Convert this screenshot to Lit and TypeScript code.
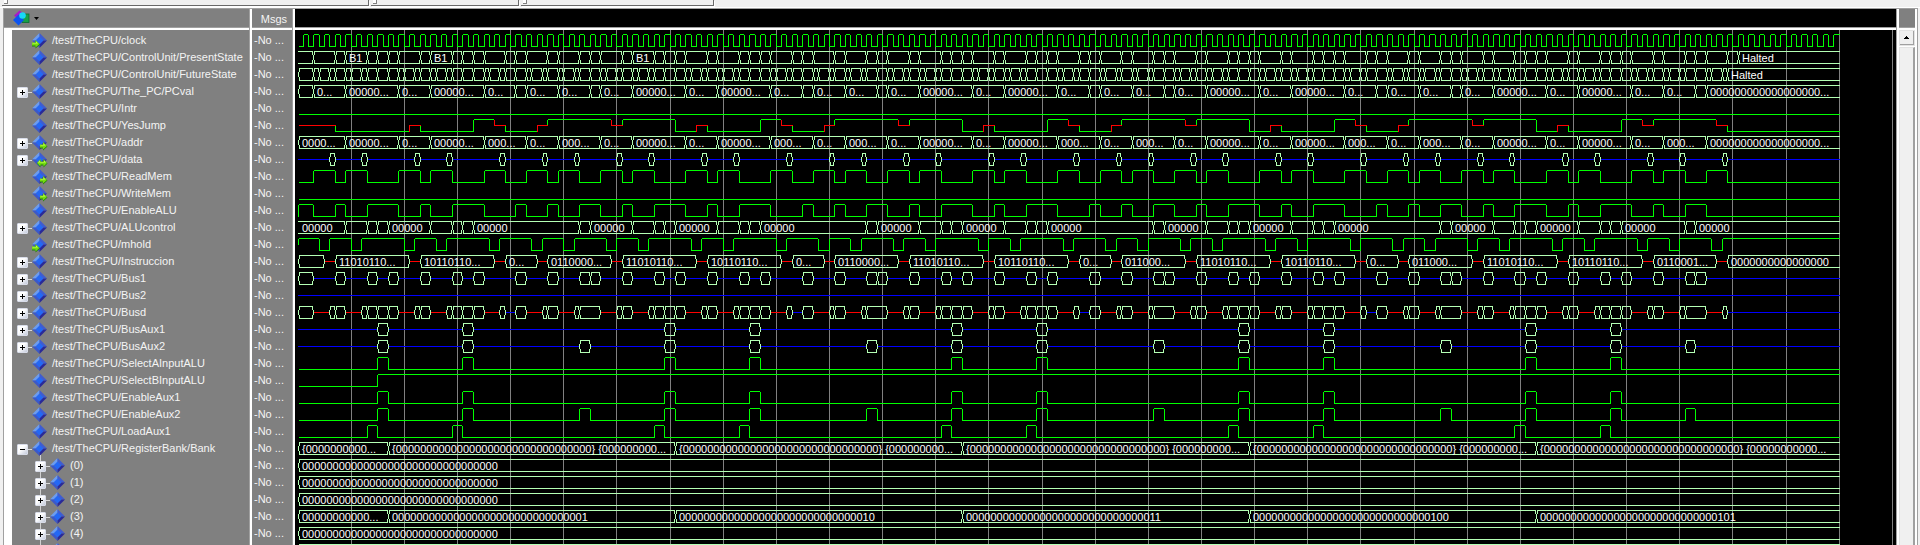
import { LitElement, html, svg, css, nothing } from "lit";
import { customElement, property } from "lit/decorators.js";

type Level = "hi" | "lo" | "mid";
type Step = [start: number, level: Level];
type Cell = { from: number; to: number; kind: "bus" | "z" | "x"; label?: string; open?: boolean };
type Port = "in" | "out" | "inout";

interface Signal {
  name: string;
  value?: string;
  port?: Port;
  tree?: "+" | "-";
  child?: boolean;
  logic?: Step[];
  bus?: Cell[];
}

/* Times are counted in half clock periods. */
const END = 290;
const LOOP = 54;
const STARTS = [3, 57, 111, 165, 219];
const ROW = 17;
const ORIGIN = 3;
const HALF = 1488 / 280;
const X = (t: number) => ORIGIN + Math.floor(t * HALF);

/* Relative times of one program loop; the last pass ends with the halt sequence. */
const unroll = (rel: number[], tail: number[], cut = 36): number[] => [
  ...STARTS.slice(0, -1).flatMap((s) => rel.map((r) => s + r)),
  ...rel.filter((r) => r < cut).map((r) => STARTS[4] + r),
  ...tail,
];

const fetches = unroll([0, 6, 16, 22, 32, 40, 46], [257, 265]);

const cells = (marks: number[], label: (from: number, i: number) => string | undefined, openStart = false): Cell[] => {
  const all = [0, ...marks.filter((m) => m > 0), END];
  return all.slice(0, -1).map((from, i) => ({
    from,
    to: all[i + 1],
    kind: "bus" as const,
    label: label(from, i),
    open: openStart && i === 0,
  }));
};

/* Boxes on an otherwise idle line. */
const sparse = (boxes: [number, number][], idle: "z" | "x"): Cell[] => {
  const out: Cell[] = [];
  let at = 0;
  for (const [from, to] of boxes) {
    if (from > at) out.push({ from: at, to: from, kind: idle });
    out.push({ from, to, kind: "bus" });
    at = to;
  }
  if (at < END) out.push({ from: at, to: END, kind: idle });
  return out;
};

const pulses = (ranges: [number, number][], on: Level = "hi", off: Level = "lo"): Step[] => {
  const steps: Step[] = [];
  if (!ranges.length || ranges[0][0] > 0) steps.push([0, off]);
  for (const [a, b] of ranges) {
    steps.push([a, on]);
    if (b < END) steps.push([b, off]);
  }
  return steps;
};

const clock: Step[] = Array.from({ length: END }, (_, t): Step => [t, t % 2 ? "hi" : "lo"]);

const states = unroll(
  [0, 4, 6, 10, 12, 14, 16, 20, 22, 26, 28, 30, 32, 36, 38, 40, 44, 46, 50, 52],
  [255, 257, 261, 263, 265, 269, 271],
);
const nextStates = [
  ...states.filter((t) => t < 271),
  ...fetches.flatMap((t) => [t + 1, t + 3]),
].sort((a, b) => a - b);

const pcMarks = unroll([0, 6, 16, 22, 32, 38, 40, 46, 52], [257, 263, 265]);
const addrMarks = unroll([6, 16, 22, 32, 40, 46, 54], [257, 265]);
const aluMarks = unroll([6, 10, 12, 14, 22, 26, 28, 30, 50, 52], [261, 263]);
const LONG = "0".repeat(18) + "...";
const ZERO = "0".repeat(32);

const widthLabel = (marks: number[]) => (from: number) => {
  const to = [...marks, END].find((m) => m > from) ?? END;
  const w = to - from;
  if (w > 20) return LONG;
  return w >= 10 ? "00000..." : w === 9 ? "0000..." : w === 8 ? "000..." : w === 6 ? "0..." : from === 0 ? undefined : undefined;
};

const aluLabel = (from: number) =>
  from === 0 || from === 263 || [14, 30, 52].includes((from - 3) % LOOP) ? "00000" : undefined;

const jump: Step[] = [[0, "mid"], [7, "lo"], [21, "mid"], [23, "lo"]];
STARTS.forEach((s, i) => {
  if (i) jump.push([s + 4, "hi"], [s + 14, "lo"], [s + 18, "mid"], [s + 20, "lo"]);
  jump.push([s + 30, "hi"], [s + 34, "mid"]);
  /* The mid level that closes a pass runs two units into the next one. */
  if (i < 4) jump.push([s + 36, "lo"], [s + 42, "mid"], [s + 44, "hi"], [s + 56, "mid"]);
  else jump.push([255, "hi"], [267, "mid"], [269, "lo"]);
});

const instruction: Cell[] = [{ from: 0, to: 5, kind: "bus" }];
STARTS.forEach((s, i) => {
  const words: [number, number, string][] = [
    [s + 4, s + 18, "11010110..."],
    [s + 20, s + 34, "10110110..."],
  ];
  if (i < 4) words.push([s + 36, s + 42, "0..."], [s + 44, s + 56, i < 2 ? "0110000..." : "011000..."]);
  else words.push([255, 267, "0110001..."], [269, END, "0".repeat(16)]);
  for (const [from, to, label] of words) {
    instruction.push({ from: from - 2, to: from, kind: "x" }, { from, to, kind: "bus", label });
  }
});

const span = (rel: [number, number][], tail: [number, number][]): [number, number][] => [
  ...STARTS.slice(0, -1).flatMap((s) => rel.map(([a, b]): [number, number] => [s + a, s + b])),
  ...rel.filter(([a]) => a < 36).map(([a, b]): [number, number] => [STARTS[4] + a, STARTS[4] + b]),
  ...tail,
];

const bus1 = span(
  [[4, 6], [10, 12], [14, 16], [20, 22], [26, 28], [30, 32], [38, 40], [44, 46], [50, 52], [52, 54]],
  [[255, 257], [261, 263], [263, 265]],
);
const aux1 = span([[12, 14], [28, 30]], []);
const aux2 = span([[12, 14], [28, 30], [50, 52]], [[261, 263]]);
const load = span([[10, 12], [26, 28]], []);
const busd = span(
  [[3, 4], [4, 6], [9, 10], [10, 12], [12, 14], [14, 16], [19, 20], [20, 22], [25, 26], [26, 28], [28, 30],
   [30, 32], [35, 36], [38, 40], [43, 44], [44, 46], [49, 50], [50, 54]],
  [[255, 257], [260, 261], [261, 265], [268, 269]],
);
const busdCells = sparse([[0, 3], ...busd], "x").map((c): Cell =>
  c.kind === "x" && (c.to - c.from === 2 || c.from === 269) ? { ...c, kind: "z" } : c,
);

const waits = fetches.map((t): [number, number] => [t, t + 4]);
/* The ALU rests during every wait; the jump wait lasts one state longer. */
const aluOff = waits.map(([a, b]): [number, number] =>
  a === 265 ? [a, END] : STARTS.slice(0, -1).includes(a - 32) ? [a, b + 2] : [a, b],
);

const regMarks = [17, 71, 125, 179, 233];
const bankLabel = (_: number, i: number) =>
  i === 0 ? "{0000000000..." : `{${ZERO}} {${"0".repeat(i === 5 ? 11 : 9)}...`;
const reg3Label = (_: number, i: number) => (i === 0 ? "00000000000..." : i.toString(2).padStart(32, "0"));

const zeroReg = (name: string): Signal => ({ name, tree: "+", child: true, bus: cells([], () => ZERO) });

const P = "/test/TheCPU/";
const SIGNALS: Signal[] = [
  { name: P + "clock", port: "in", logic: clock },
  { name: P + "ControlUnit/PresentState", bus: cells(states, (t) => ([9, 25, 63].includes(t) ? "B1" : t === 271 ? "Halted" : undefined), true) },
  { name: P + "ControlUnit/FutureState", bus: cells(nextStates, (t) => (t === 269 ? "Halted" : undefined)) },
  { name: P + "The_PC/PCval", tree: "+", bus: cells(pcMarks, widthLabel(pcMarks)) },
  { name: P + "Intr", logic: [[0, "lo"]] },
  { name: P + "YesJump", logic: jump },
  { name: P + "addr", port: "out", tree: "+", bus: cells(addrMarks, widthLabel(addrMarks)) },
  { name: P + "data", port: "inout", tree: "+", bus: sparse(fetches.map((t) => [t + 3, t + 4]), "z") },
  { name: P + "ReadMem", port: "out", logic: pulses(waits) },
  { name: P + "WriteMem", port: "out", logic: [[0, "lo"]] },
  { name: P + "EnableALU", logic: pulses(aluOff, "lo", "hi") },
  { name: P + "ALUcontrol", tree: "+", bus: cells(aluMarks, aluLabel, true) },
  { name: P + "mhold", port: "in", logic: pulses(fetches.map((t) => [t + 1, t + 3]), "lo", "hi") },
  { name: P + "Instruccion", tree: "+", bus: instruction },
  { name: P + "Bus1", tree: "+", bus: sparse([[0, 3], ...bus1], "z") },
  { name: P + "Bus2", tree: "+", bus: sparse([], "z") },
  { name: P + "Busd", tree: "+", bus: busdCells },
  { name: P + "BusAux1", tree: "+", bus: sparse(aux1, "z") },
  { name: P + "BusAux2", tree: "+", bus: sparse(aux2, "z") },
  { name: P + "SelectAInputALU", logic: pulses(aux1) },
  { name: P + "SelectBInputALU", logic: [[0, "lo"], [15, "hi"]] },
  { name: P + "EnableAux1", logic: pulses(aux1) },
  { name: P + "EnableAux2", logic: pulses(aux2) },
  { name: P + "LoadAux1", logic: pulses(load) },
  { name: P + "RegisterBank/Bank", tree: "-", bus: cells(regMarks, bankLabel) },
  zeroReg("(0)"),
  zeroReg("(1)"),
  zeroReg("(2)"),
  { name: "(3)", tree: "+", child: true, bus: cells(regMarks, reg3Label) },
  zeroReg("(4)"),
  { name: "", value: "", tree: "+", child: true, bus: cells([], () => undefined) },
];

const Y: Record<Level, number> = { hi: 4, mid: 10, lo: 16 };

@customElement("signal-icon")
export class SignalIcon extends LitElement {
  @property() port?: Port;

  static styles = css`
    :host { display: block; width: 15px; height: 15px; }
    svg { display: block; overflow: visible; }
    .arrow { fill: #74dc10; }
    .shine { fill: #c8ff50; }
    .shade { fill: #1f7a0c; }
  `;

  render() {
    const right = svg`<path class="shade" d="M8 10h3V7.500l4.500 4-4.500 4V13.500H8z"/><path class="arrow" d="M8 9.500h3V7l4 4-4 3.500V12.500H8z"/><path class="shine" d="M8.500 10h3V8.500l2 2h-5z"/>`;
    const left = svg`<path class="shade" d="M0 10h3.500V7.500l4.500 4-4.500 4V13.500H0z"/><path class="arrow" d="M0 9.500h3.500V7l4 4-4 3.500V12.500H0z"/><path class="shine" d="M.5 10h3.500V8.500l2 2H.5z"/>`;
    const both = svg`<path class="shade" d="M5 11.500l3.500-4v2.500h3V7.500l4 4-4 4v-2h-3v2z"/><path class="arrow" d="M5 11l3.500-4v2.500h3V7l3.500 4-3.500 3.500v-2h-3v2z"/><path class="shine" d="M6 10.500l2-2V10h4V8.500l2 2z"/>`;
    return html`<svg width="15" height="15" viewBox="0 0 15 15" aria-hidden="true">
      <path d="M7.500 0L0 7.500h7.500z" fill="#6c9cf0" />
      <path d="M7.500 0L15 7.500H7.500z" fill="#3f5cd0" />
      <path d="M0 7.500L7.500 15V7.500z" fill="#3c58c8" />
      <path d="M15 7.500L7.500 15V7.500z" fill="#2a2a98" />
      <path d="M7.500 3.500l4 4-4 4-4-4z" fill="#2468f4" />
      ${this.port === "out" ? right : this.port === "in" ? left : this.port === "inout" ? both : nothing}
    </svg>`;
  }
}

@customElement("wave-canvas")
export class WaveCanvas extends LitElement {
  static styles = css`
    :host { display: block; background: #000; overflow: hidden; }
    svg { display: block; width: 100%; }
    path { fill: none; stroke-width: 1; shape-rendering: crispEdges; }
    .grid { stroke: #808080; }
    .hi, .lo { stroke: #00ff00; }
    .mid, .x { stroke: #ff0000; }
    .z { stroke: #0000ff; }
    .bus { stroke: #b4ffb4; }
    text { fill: #fff; font: 11px "Liberation Sans", Arial, sans-serif; white-space: pre; }
  `;

  private logic(steps: Step[]) {
    const path: Record<Level, string> = { hi: "", lo: "", mid: "" };
    steps.forEach(([t, level], i) => {
      const a = X(t);
      const last = i === steps.length - 1;
      const b = X(last ? END : steps[i + 1][0]);
      const from = i === 0 || level === "hi" ? a + 1 : a;
      path[level] += `M${from} ${Y[level] + 0.5}H${level === "hi" && !last ? b : b + 1}`;
      if (i === 0 && level === "hi") path.hi += `M${a + 0.5} 5V${steps[1][0] === 3 ? 17 : 11}`;
      if (i > 0) {
        const ys = [Y[steps[i - 1][1]], Y[level]];
        path[level] += `M${a + 0.5} ${Math.min(...ys) + 1}V${Math.max(...ys) + 1}`;
      }
    });
    return (["lo", "hi", "mid"] as Level[]).map((l) => (path[l] ? svg`<path class=${l} d=${path[l]} />` : nothing));
  }

  private bus(list: Cell[]) {
    const path = { bus: "", x: "", z: "" };
    for (const c of list) {
      const a = X(c.from);
      const b = X(c.to);
      if (c.kind !== "bus") {
        path[c.kind] += `M${c.from ? a + 1 : a} 10.5H${c.to === END ? b + 1 : b}`;
        continue;
      }
      const l = c.open ? a : a + 1;
      const r = c.to === END ? b + 1 : b;
      path.bus += `M${l} 4.5H${r}M${l} 16.5H${r}`;
      if (!c.open) path.bus += `M${a + 1.5} 5V8M${a + 0.5} 8V13M${a + 1.5} 13V16`;
      if (c.to !== END) path.bus += `M${b - 0.5} 5V8M${b + 0.5} 8V13M${b - 0.5} 13V16`;
    }
    return [
      ...(["z", "x", "bus"] as const).map((k) => (path[k] ? svg`<path class=${k} d=${path[k]} />` : nothing)),
      ...list.filter((c) => c.label).map((c) => svg`<text x=${X(c.from) + 4} y="15">${c.label}</text>`),
    ];
  }

  render() {
    const height = SIGNALS.length * ROW;
    const grid = Array.from({ length: 80 }, (_, k) => `M${X((k + 1) * 10) + 0.5} 0V${height}`).join("");
    return html`<svg height=${height} role="img" aria-label="Signal waveforms">
      <path class="grid" d=${grid} />
      ${SIGNALS.map((s, i) => svg`<g transform="translate(0 ${i * ROW})">${s.logic ? this.logic(s.logic) : this.bus(s.bus ?? [])}</g>`)}
    </svg>`;
  }
}

@customElement("app-root")
export class AppRoot extends LitElement {
  static styles = css`
    :host {
      display: flex;
      flex-direction: column;
      height: 100vh;
      overflow: hidden;
      background: #f0f0f0;
      color: #f4f4f4;
      font: 11px/17px "Liberation Sans", Arial, sans-serif;
    }
    * { box-sizing: border-box; }
    button { font: inherit; padding: 0; border: 0; }
    .bars { display: flex; gap: 2px; height: 8px; padding: 0 0 0 2px; border-bottom: 1px solid #fff; flex: none; }
    .bar { height: 6px; border-right: 1px solid #696969; border-bottom: 1px solid #696969; box-shadow: 1px 1px #fff; padding-left: 2px; }
    .bar:nth-child(1) { width: 367px; }
    .bar:nth-child(2) { width: 148px; }
    .bar:nth-child(3) { width: 193px; }
    .grip { width: 4px; height: 4px; border: solid #808080; border-width: 0 1px 1px 0; background: #fff; }
    .window {
      flex: 1;
      min-height: 0;
      display: grid;
      grid-template-columns: 246px 43px minmax(0, 1fr) 20px;
      margin: 0 2px 0 3px;
      border: solid #a0a0a0;
      border-width: 1px 1px 0 1px;
      background: #fff;
    }
    .pane { display: flex; flex-direction: column; min-height: 0; overflow: hidden; }
    .names, .values, .waves { border-right: 1px solid #a0a0a0; }
    .values, .waves, .side { padding-left: 2px; }
    .head { flex: none; height: 19px; margin-bottom: 2px; background: #808080; border-bottom: 1px solid #a0a0a0; }
    .waves .head { background: #000; }
    .tools { display: flex; align-items: center; gap: 4px; width: 30px; height: 18px; margin-left: 9px; background: none; }
    .list { flex: 1; background: #808080; margin: 0; padding: 0; list-style: none; white-space: nowrap; }
    .names .list { margin-left: 8px; }
    .row { position: relative; display: flex; height: 17px; padding-left: 5px; line-height: 20px; }
    .child { padding-left: 23px; }
    .child::before { content: ""; position: absolute; left: 28px; top: 0; height: 17px; border-left: 1px solid #d0d0d0; }
    .slot { flex: none; width: 15px; height: 17px; padding-top: 6px; }
    .joint { display: flex; align-items: center; }
    .joint::after { content: ""; flex: 1; height: 1px; background: #d8d8d8; }
    .toggle {
      position: relative;
      width: 11px;
      height: 11px;
      border: 1px solid #d8dce8;
      border-radius: 1px;
      background: linear-gradient(135deg, #fff 40%, #c4cbdc);
      display: block;
    }
    .toggle svg { display: block; }
    signal-icon { flex: none; margin: 3px 5px 0 0; }
    .value { height: 17px; line-height: 20px; padding-left: 2px; }
    .title { text-align: right; padding-right: 5px; line-height: 20px; }
    wave-canvas { flex: none; }
    .side .head { margin-right: 2px; }
    .scroll { display: flex; flex-direction: column; gap: 1px; flex: 1; width: 16px; }
    .up { height: 16px; background: #f0f0f0; border: solid; border-width: 1px 2px 2px 1px; border-color: #fff #a0a0a0 #a0a0a0 #fff; display: grid; place-items: center; outline: 1px solid #e3e3e3; outline-offset: -1px; }
    .thumb { flex: 1; background: #f0f0f0; border: solid; border-width: 1px 2px 0 1px; border-color: #e3e3e3 #a0a0a0 #fff #e3e3e3; }
  `;

  private row(s: Signal) {
    return html`<li class="row ${s.child ? "child" : ""}">
      <span class="slot">
        ${s.tree
          ? html`<span class="joint"><button class="toggle" aria-label="${s.tree === "+" ? "Expand" : "Collapse"} ${s.name}">
              <svg width="9" height="9" aria-hidden="true" shape-rendering="crispEdges"><path d=${s.tree === "+" ? "M2 4.5H7M4.500 2V7" : "M2 4.5H7"} stroke="#000" /></svg>
            </button></span>`
          : nothing}
      </span>
      <signal-icon .port=${s.port}></signal-icon>
      <span>${s.name}</span>
    </li>`;
  }

  render() {
    return html`
      <div class="bars">
        <div class="bar"><div class="grip"></div></div>
        <div class="bar"><div class="grip"></div></div>
        <div class="bar"><div class="grip"></div></div>
      </div>
      <main class="window">
        <section class="pane names">
          <div class="head">
            <button class="tools" aria-label="Object filter">
              <svg width="17" height="16" viewBox="0 0 17 16" aria-hidden="true">
                <path d="M6.500.5l5 4-7 4-3.500-3z" fill="#a818c8" />
                <rect x="9" y="4" width="7" height="8.500" fill="#18a048" stroke="#0c6c30" stroke-width=".8" />
                <path d="M5.500 4.500l5.500 5.500-5.500 5.500L0 10z" fill="#0c54f0" />
                <circle cx="9.500" cy="5.500" r="3.300" fill="#18d8f8" />
              </svg>
              <svg width="5" height="3" viewBox="0 0 5 3" aria-hidden="true"><path d="M0 0h5L2.500 3z" fill="#000" /></svg>
            </button>
          </div>
          <ul class="list">${SIGNALS.map((s) => this.row(s))}</ul>
        </section>
        <section class="pane values">
          <div class="head title">Msgs</div>
          <ul class="list">${SIGNALS.map((s) => html`<li class="value">${s.value ?? "-No ..."}</li>`)}</ul>
        </section>
        <section class="pane waves">
          <div class="head"></div>
          <wave-canvas></wave-canvas>
        </section>
        <section class="pane side">
          <div class="head"></div>
          <div class="scroll">
            <button class="up" aria-label="Scroll up">
              <svg width="7" height="4" viewBox="0 0 7 4" shape-rendering="crispEdges" aria-hidden="true"><path d="M3 0h1v1h1v1h1v1H1V2h1V1h1z" fill="#000" /></svg>
            </button>
            <div class="thumb"></div>
          </div>
        </section>
      </main>
    `;
  }
}
